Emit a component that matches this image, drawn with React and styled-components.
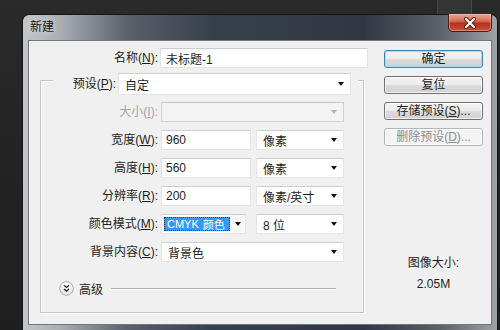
import React from "react";
import styled, { createGlobalStyle } from "styled-components";

const GlobalStyle = createGlobalStyle`
  html, body {
    margin: 0;
    padding: 0;
    background: #242424;
  }
  body {
    width: 500px;
    height: 330px;
    overflow: hidden;
    font-family: "Liberation Sans", "Noto Sans CJK SC", sans-serif;
    font-size: 12px;
    color: #1e1e1e;
  }
`;

const Screen = styled.div`
  width: 500px;
  height: 330px;
  box-sizing: border-box;
  padding-left: 22px;
  background: linear-gradient(#2a2a2a, #222 60%, #1f1f1f);
  display: flex;
  flex-direction: column;
  overflow: hidden;
`;

const BackStrip = styled.div`
  height: 14px;
  flex-shrink: 0;
  display: flex;
`;

const BackTile = styled.div`
  margin-left: 415px;
  width: 33px;
  background: #353535;
  border-left: 1px solid #474747;
  border-right: 1px solid #474747;
`;

const Dialog = styled.div`
  width: 476px;
  flex: 1;
  box-sizing: border-box;
  display: flex;
  flex-direction: column;
  padding: 0 5px 5px;
  border: 1px solid #151515;
  border-bottom: none;
  border-radius: 7px 7px 0 0;
  background: linear-gradient(
    to right,
    #c3c7cb 0%,
    #a9aeb3 8%,
    #59616b 22%,
    #36404b 40%,
    #2f3843 72%,
    #5b6168 88%,
    #9ea3a8 100%
  );
`;

const TitleBar = styled.div`
  height: 25px;
  display: flex;
  align-items: flex-start;
`;

const Title = styled.div`
  padding-left: 2px;
  line-height: 25px;
  font-size: 12px;
  color: #151515;
  text-shadow: 0 0 6px rgba(255, 255, 255, 0.7);
`;

const CloseButton = styled.div`
  margin-left: auto;
  margin-top: -1px;
  width: 44px;
  height: 18px;
  box-sizing: border-box;
  display: flex;
  align-items: center;
  justify-content: center;
  border: 1px solid #4a1810;
  border-top: none;
  border-radius: 0 0 5px 5px;
  background: linear-gradient(#e8ab9c 0%, #d56a52 42%, #b2321a 55%, #c9553a 100%);
  box-shadow: inset 0 0 0 1px rgba(255, 200, 180, 0.45);
`;

const Panel = styled.div`
  flex: 1;
  display: grid;
  grid-template-columns: 339px 99px;
  column-gap: 16px;
  padding: 7px 10px 0 0;
  background: #f0f0f0;
  border: 1px solid #6f767e;
`;

const LeftColumn = styled.div`
  display: flex;
  flex-direction: column;
`;

const NameRow = styled.div`
  display: grid;
  grid-template-columns: 129px 208px;
  column-gap: 2px;
  height: 20px;
  align-items: center;
`;

const Label = styled.label`
  text-align: right;
  white-space: nowrap;
  line-height: 20px;
  color: ${(p) => (p.$disabled ? "#a3a3a3" : "#1e1e1e")};
`;

const TextBox = styled.div`
  height: 20px;
  box-sizing: border-box;
  padding-left: ${(p) => p.$pad || 5}px;
  display: flex;
  align-items: center;
  background: #fff;
  border: 1px solid #e3e5ea;
  border-top-color: #cbcdd2;
  width: ${(p) => (p.$w ? `${p.$w}px` : "auto")};
`;

const GroupBox = styled.div`
  margin: 12px 0 0 11px;
  width: 324px;
  height: 233px;
  box-sizing: border-box;
  border: 1px solid #c2c6ca;
  box-shadow: inset 1px 1px 0 #fff, 1px 1px 0 #fff;
  display: flex;
  flex-direction: column;
`;

const Legend = styled.div`
  margin: -8px 5px 0 12px;
  padding-right: 7px;
  height: 22px;
  display: grid;
  grid-template-columns: 63px 233px;
  column-gap: 2px;
  align-items: center;
  background: #f0f0f0;
`;

const Rows = styled.div`
  margin-top: 7px;
  display: flex;
  flex-direction: column;
  gap: 8px;
`;

const Row = styled.div`
  display: grid;
  grid-template-columns: 117px 183px;
  column-gap: 3px;
  height: 20px;
  align-items: center;
`;

const Pair = styled.div`
  display: flex;
  gap: ${(p) => p.$gap}px;
`;

const Select = styled.div`
  height: ${(p) => p.$h || 20}px;
  box-sizing: border-box;
  width: ${(p) => (p.$w ? `${p.$w}px` : "100%")};
  display: flex;
  align-items: center;
  padding: 0 6px 0 6px;
  background: ${(p) => (p.$disabled ? "#f3f3f3" : "#fff")};
  border: 1px solid ${(p) => (p.$disabled ? "#d2d2d2" : "#e3e5ea")};
  border-top-color: ${(p) => (p.$disabled ? "#c6c6c6" : "#cbcdd2")};
`;

const SelectValue = styled.span`
  flex: 1;
  white-space: nowrap;
`;

const Arrow = styled.span`
  width: 0;
  height: 0;
  border-left: 3.5px solid transparent;
  border-right: 3.5px solid transparent;
  border-top: 4px solid ${(p) => (p.$disabled ? "#b3b3b3" : "#111")};
`;

const ComboBox = styled.div`
  width: 85px;
  height: 20px;
  box-sizing: border-box;
  display: flex;
  background: #fff;
  border: 1px solid #e3e5ea;
  border-top-color: #cbcdd2;
`;

const Highlight = styled.span`
  flex: 1;
  margin: 2px 1px 2px 2px;
  padding-left: 3px;
  display: flex;
  align-items: center;
  gap: 4px;
  font-size: 11px;
  background: #3399ff;
  color: #fff;
  outline: 1px dotted #1b3a66;
  outline-offset: -1px;
  white-space: nowrap;
  overflow: hidden;
`;

const DropButton = styled.span`
  width: 14px;
  display: flex;
  align-items: center;
  justify-content: center;
  background: #f7f7f7;
`;

const Advanced = styled.div`
  margin-top: 19px;
  width: 100%;
  box-sizing: border-box;
  padding: 0 27px 0 18px;
  height: 15px;
  display: flex;
  align-items: center;
  gap: 5px;
`;

const AdvancedLine = styled.span`
  display: block;
  flex-grow: 1;
  margin-left: 3px;
  height: 1px;
  background: #a9adb1;
  box-shadow: 0 1px 0 #ffffff;
`;

const RightColumn = styled.div`
  display: flex;
  flex-direction: column;
`;

const ButtonStack = styled.div`
  margin-top: 2px;
  display: flex;
  flex-direction: column;
  gap: 8px;
`;

const Button = styled.button`
  height: 18px;
  width: 100%;
  padding: 0;
  box-sizing: border-box;
  font: inherit;
  line-height: 16px;
  color: ${(p) => (p.disabled ? "#8e8e8e" : "#1e1e1e")};
  border: 1px solid
    ${(p) => (p.$primary ? "#3d87b4" : p.disabled ? "#b1b5b8" : "#707070")};
  border-radius: 3px;
  background: ${(p) =>
    p.disabled
      ? "#f4f4f4"
      : "linear-gradient(#f4f4f4 0%, #ececec 48%, #dcdcdc 52%, #d0d0d0 100%)"};
  box-shadow: inset 0 0 0 1px
    ${(p) => (p.$primary ? "#9fd9f4" : "rgba(255, 255, 255, 0.75)")};
`;

const SizeInfo = styled.div`
  margin-top: 110px;
  display: flex;
  flex-direction: column;
  align-items: center;
  gap: 7px;
  line-height: 14px;
`;

const ChevronIcon = () => (
  <svg width="15" height="15" viewBox="0 0 15 15">
    <defs>
      <linearGradient id="chev" x1="0" y1="0" x2="0" y2="1">
        <stop offset="0" stopColor="#ffffff" />
        <stop offset="1" stopColor="#e2e2e2" />
      </linearGradient>
    </defs>
    <circle cx="7.5" cy="7.5" r="6.8" fill="url(#chev)" stroke="#a9a9a9" />
    <path
      d="M5 4.2 L7.5 6.4 L10 4.2 M5 8 L7.5 10.2 L10 8"
      fill="none"
      stroke="#222"
      strokeWidth="1.3"
    />
  </svg>
);

const CloseGlyph = () => (
  <svg width="14" height="12" viewBox="0 0 14 12">
    <path
      d="M3 2 L11 10 M11 2 L3 10"
      stroke="#5a1d12"
      strokeWidth="4"
      strokeLinecap="round"
    />
    <path
      d="M3 2 L11 10 M11 2 L3 10"
      stroke="#fff"
      strokeWidth="2.2"
      strokeLinecap="round"
    />
  </svg>
);

const DropSelect = ({ value, w, disabled }) => (
  <Select $w={w} $disabled={disabled}>
    <SelectValue>{value}</SelectValue>
    <Arrow $disabled={disabled} />
  </Select>
);

export default function App() {
  return (
    <>
      <GlobalStyle />
      <Screen>
        <BackStrip>
          <BackTile />
        </BackStrip>
        <Dialog>
          <TitleBar>
            <Title>新建</Title>
            <CloseButton>
              <CloseGlyph />
            </CloseButton>
          </TitleBar>
          <Panel>
            <LeftColumn>
              <NameRow>
                <Label>
                  名称(<u>N</u>):
                </Label>
                <TextBox>未标题-1</TextBox>
              </NameRow>

              <GroupBox>
                <Legend>
                  <Label>
                    预设(<u>P</u>):
                  </Label>
                  <Select $h={22}>
                    <SelectValue>自定</SelectValue>
                    <Arrow />
                  </Select>
                </Legend>

                <Rows>
                  <Row>
                    <Label $disabled>
                      大小(<u>I</u>):
                    </Label>
                    <DropSelect value="" disabled />
                  </Row>
                  <Row>
                    <Label>
                      宽度(<u>W</u>):
                    </Label>
                    <Pair $gap={5}>
                      <TextBox $w={90} $pad={4}>960</TextBox>
                      <DropSelect value="像素" w={88} />
                    </Pair>
                  </Row>
                  <Row>
                    <Label>
                      高度(<u>H</u>):
                    </Label>
                    <Pair $gap={5}>
                      <TextBox $w={90} $pad={4}>560</TextBox>
                      <DropSelect value="像素" w={88} />
                    </Pair>
                  </Row>
                  <Row>
                    <Label>
                      分辨率(<u>R</u>):
                    </Label>
                    <Pair $gap={5}>
                      <TextBox $w={90} $pad={4}>200</TextBox>
                      <DropSelect value="像素/英寸" w={88} />
                    </Pair>
                  </Row>
                  <Row>
                    <Label>
                      颜色模式(<u>M</u>):
                    </Label>
                    <Pair $gap={10}>
                      <ComboBox>
                        <Highlight>
                          <span>CMYK</span>
                          <span>颜色</span>
                        </Highlight>
                        <DropButton>
                          <Arrow />
                        </DropButton>
                      </ComboBox>
                      <DropSelect value="8 位" w={88} />
                    </Pair>
                  </Row>
                  <Row>
                    <Label>
                      背景内容(<u>C</u>):
                    </Label>
                    <DropSelect value="背景色" />
                  </Row>
                </Rows>

                <Advanced>
                  <ChevronIcon />
                  <span>高级</span>
                  <AdvancedLine />
                </Advanced>
              </GroupBox>
            </LeftColumn>

            <RightColumn>
              <ButtonStack>
                <Button $primary>确定</Button>
                <Button>复位</Button>
                <Button>
                  存储预设(<u>S</u>)...
                </Button>
                <Button disabled>
                  删除预设(<u>D</u>)...
                </Button>
              </ButtonStack>
              <SizeInfo>
                <span>图像大小:</span>
                <span>2.05M</span>
              </SizeInfo>
            </RightColumn>
          </Panel>
        </Dialog>
      </Screen>
    </>
  );
}
